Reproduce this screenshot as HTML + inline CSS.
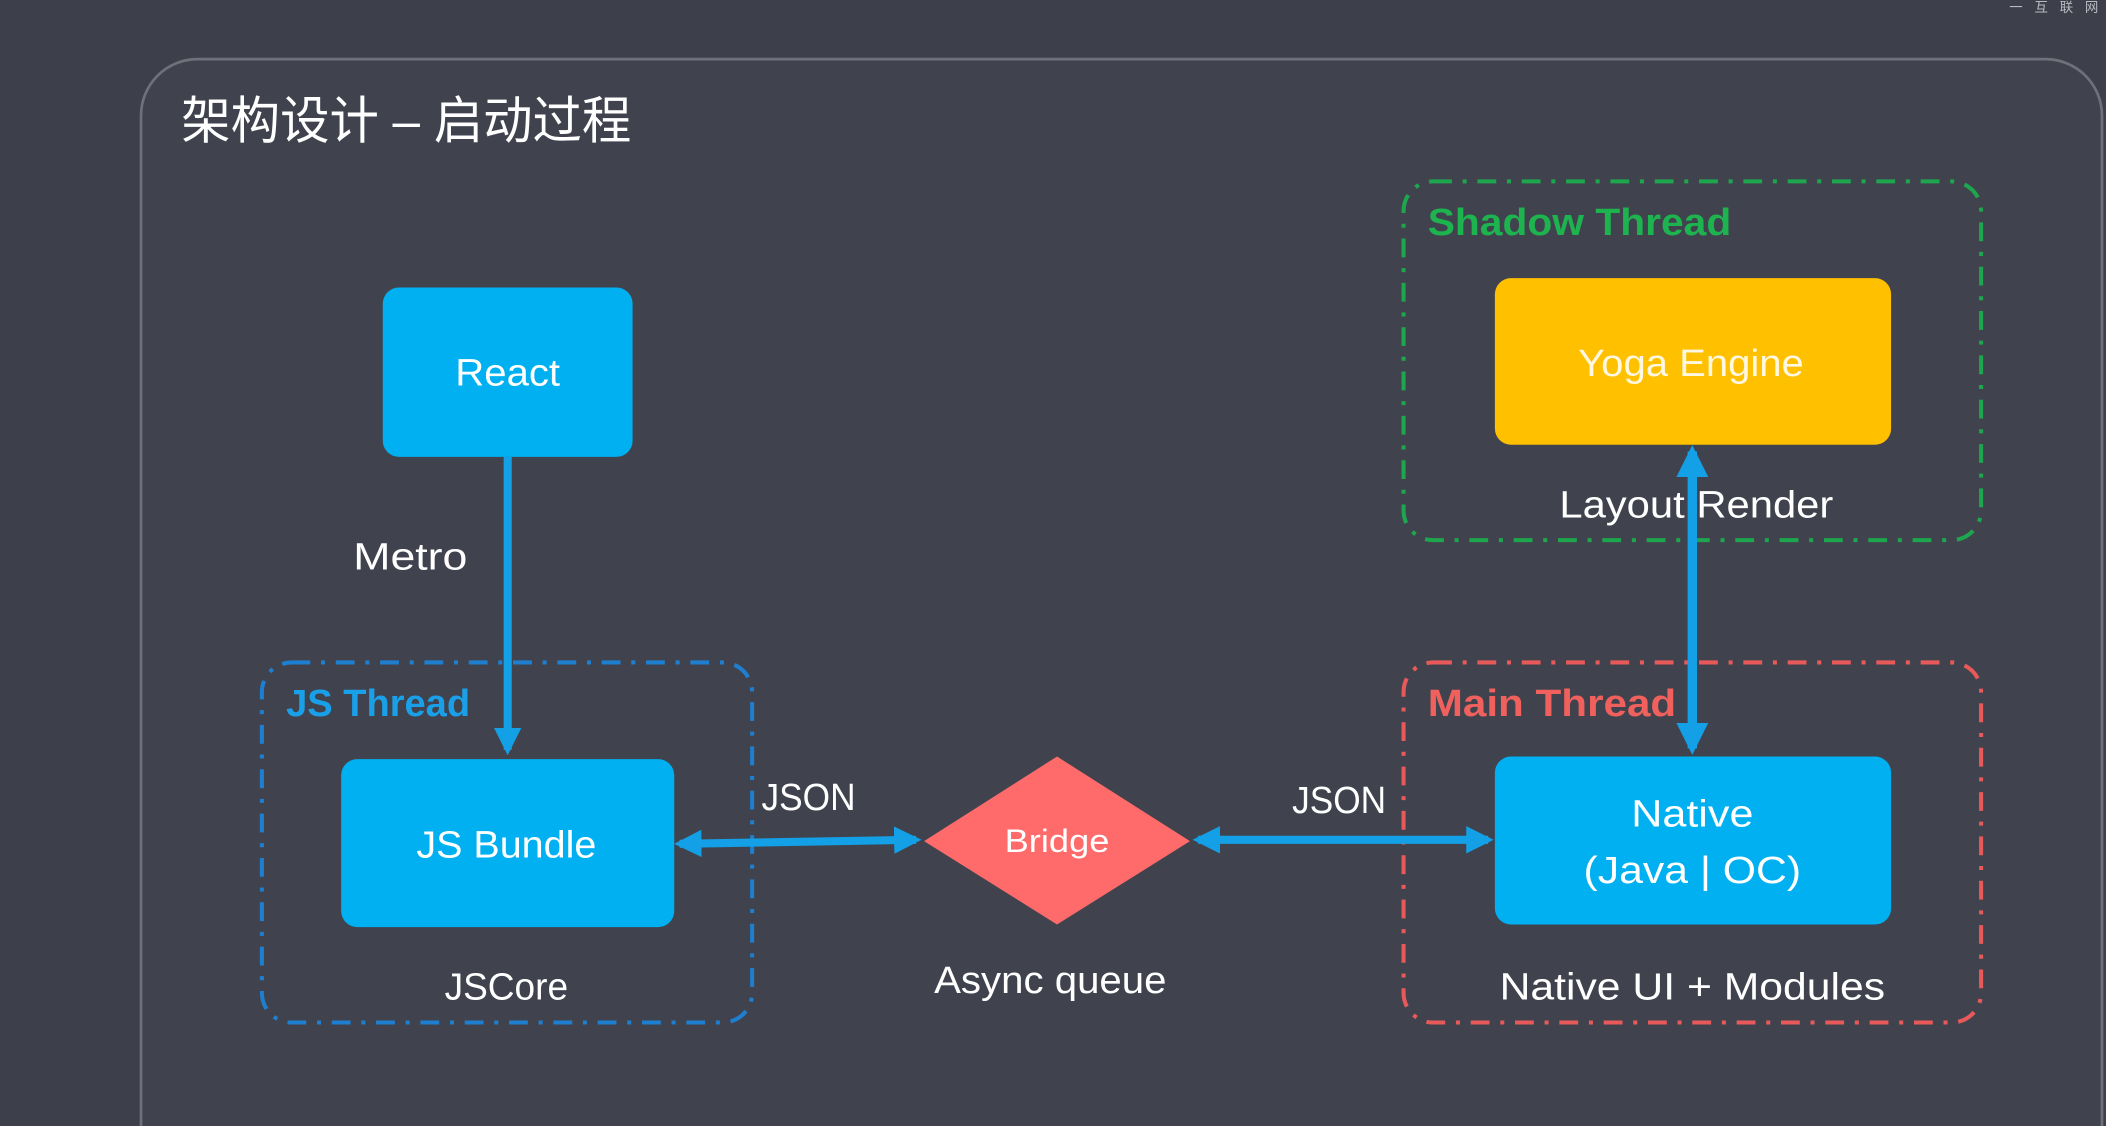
<!DOCTYPE html>
<html><head><meta charset="utf-8">
<style>
html,body{margin:0;padding:0;background:#3d404b;overflow:hidden;width:2106px;height:1126px;}
svg{display:block;}
text{font-family:"Liberation Sans","Noto Sans CJK SC",sans-serif;}
</style></head>
<body>
<svg width="2106" height="1126" viewBox="0 0 1568 838" preserveAspectRatio="none" xmlns="http://www.w3.org/2000/svg">
<defs>
<marker id="ah" viewBox="0 0 10 10" refX="8" refY="5" markerWidth="3.4" markerHeight="3.4" orient="auto-start-reverse">
<path d="M0,0 L10,5 L0,10 z" fill="#14a0e6"/>
</marker>
<clipPath id="c"><rect width="1568" height="838"/></clipPath>
</defs>
<rect width="1568" height="838" fill="#3d404b"/>
<g clip-path="url(#c)">
<rect x="105" y="44" width="1460" height="860" rx="42" fill="#40434e" stroke="#6e717a" stroke-width="2"/>
</g>
<text x="1496" y="9" font-size="10" fill="#b8bac0" letter-spacing="3">一 互 联 网</text>
<text x="135" y="103" font-size="38" fill="#ffffff" textLength="335" lengthAdjust="spacingAndGlyphs">架构设计 – 启动过程</text>

<rect x="1045" y="135" width="430" height="267" rx="22" fill="none" stroke="#1ea64e" stroke-width="3" stroke-dasharray="14 8 3 8"/>
<text x="1063" y="175" font-size="28" font-weight="bold" fill="#1db34f" textLength="226" lengthAdjust="spacingAndGlyphs">Shadow Thread</text>
<rect x="1113" y="207" width="295" height="124" rx="12" fill="#ffc000"/>
<text x="1259" y="280" font-size="28" fill="#fff7e0" text-anchor="middle" textLength="168" lengthAdjust="spacingAndGlyphs">Yoga Engine</text>
<text x="1263" y="385" font-size="28" fill="#ffffff" text-anchor="middle" textLength="204" lengthAdjust="spacingAndGlyphs">Layout Render</text>

<rect x="1045" y="493" width="430" height="268" rx="22" fill="none" stroke="#e85a5a" stroke-width="3" stroke-dasharray="14 8 3 8"/>
<text x="1063" y="533" font-size="28" font-weight="bold" fill="#f0605c" textLength="185" lengthAdjust="spacingAndGlyphs">Main Thread</text>
<rect x="1113" y="563" width="295" height="125" rx="12" fill="#00b0f0"/>
<text x="1260" y="615" font-size="28" fill="#ffffff" text-anchor="middle" textLength="91" lengthAdjust="spacingAndGlyphs">Native</text>
<text x="1260" y="657" font-size="28" fill="#ffffff" text-anchor="middle" textLength="162" lengthAdjust="spacingAndGlyphs">(Java | OC)</text>
<text x="1260" y="744" font-size="28" fill="#ffffff" text-anchor="middle" textLength="287" lengthAdjust="spacingAndGlyphs">Native UI + Modules</text>

<line x1="1260" y1="336" x2="1260" y2="557" stroke="#14a0e6" stroke-width="7" marker-start="url(#ah)" marker-end="url(#ah)"/>

<rect x="195" y="493" width="365" height="268" rx="22" fill="none" stroke="#1e7fd0" stroke-width="3" stroke-dasharray="14 8 3 8"/>
<text x="213" y="533" font-size="28" font-weight="bold" fill="#1aa0e8" textLength="137" lengthAdjust="spacingAndGlyphs">JS Thread</text>
<rect x="285" y="214" width="186" height="126" rx="12" fill="#00b0f0"/>
<text x="378" y="287" font-size="28" fill="#ffffff" text-anchor="middle" textLength="78" lengthAdjust="spacingAndGlyphs">React</text>
<line x1="378" y1="340" x2="378" y2="558" stroke="#14a0e6" stroke-width="6" marker-end="url(#ah)"/>
<text x="263" y="424" font-size="28" fill="#ffffff" textLength="85" lengthAdjust="spacingAndGlyphs">Metro</text>
<rect x="254" y="565" width="248" height="125" rx="12" fill="#00b0f0"/>
<text x="377" y="638" font-size="28" fill="#ffffff" text-anchor="middle" textLength="134" lengthAdjust="spacingAndGlyphs">JS Bundle</text>
<text x="377" y="744" font-size="28" fill="#ffffff" text-anchor="middle" textLength="92" lengthAdjust="spacingAndGlyphs">JSCore</text>

<polygon points="787,563 886,626 787,688 688,626" fill="#ff6b6b"/>
<text x="787" y="634" font-size="24" fill="#ffffff" text-anchor="middle" textLength="78" lengthAdjust="spacingAndGlyphs">Bridge</text>
<text x="782" y="739" font-size="28" fill="#ffffff" text-anchor="middle" textLength="173" lengthAdjust="spacingAndGlyphs">Async queue</text>

<line x1="506" y1="628" x2="682" y2="625" stroke="#14a0e6" stroke-width="6" marker-start="url(#ah)" marker-end="url(#ah)"/>
<line x1="892" y1="625" x2="1108" y2="625" stroke="#14a0e6" stroke-width="6" marker-start="url(#ah)" marker-end="url(#ah)"/>
<text x="567" y="603" font-size="28" fill="#ffffff" textLength="70" lengthAdjust="spacingAndGlyphs">JSON</text>
<text x="962" y="605" font-size="28" fill="#ffffff" textLength="70" lengthAdjust="spacingAndGlyphs">JSON</text>
</svg>
</body></html>
